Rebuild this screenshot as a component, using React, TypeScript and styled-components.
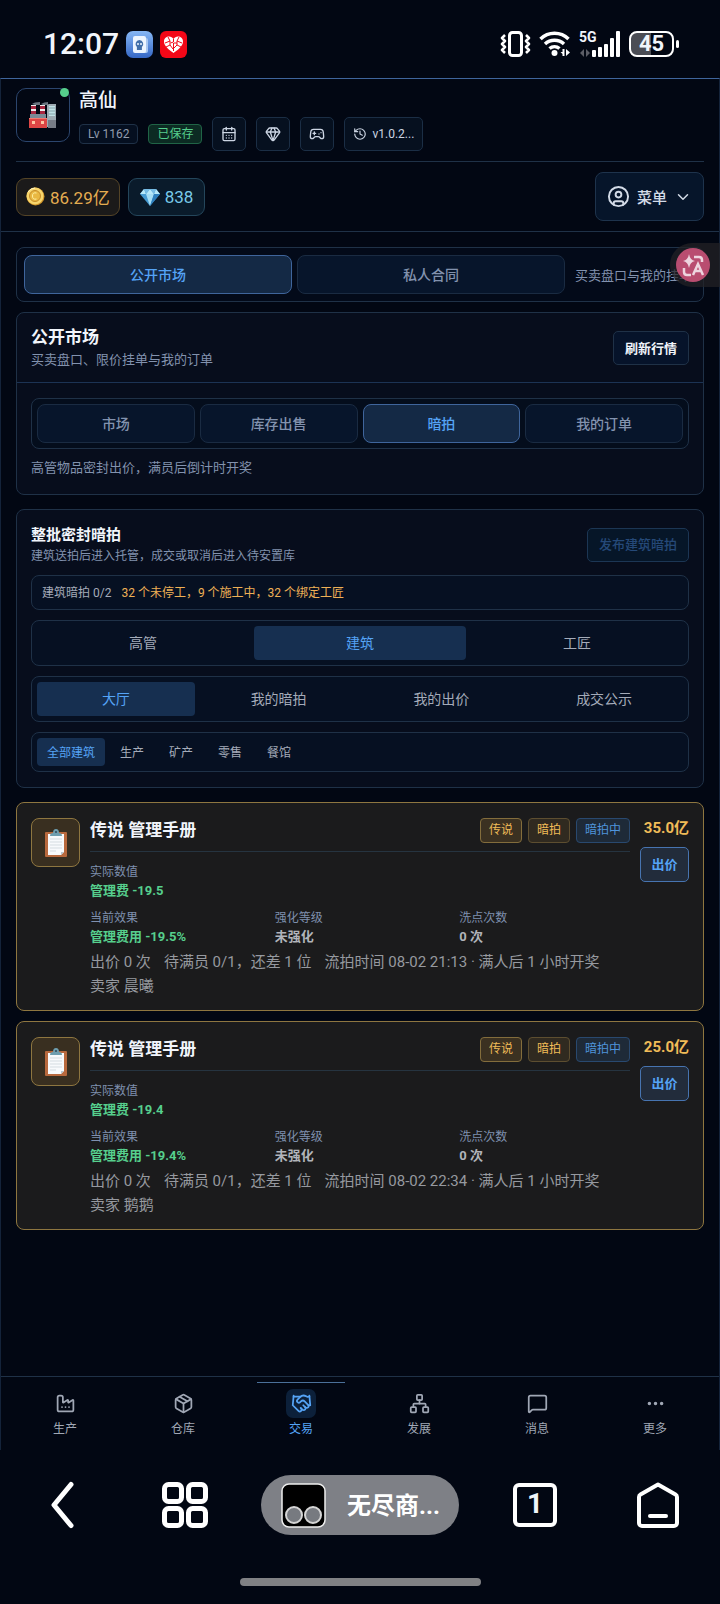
import React from 'react';
import styled, { createGlobalStyle, css } from 'styled-components';
import {
  CalendarDays,
  ChevronDown,
  CircleUser,
  Ellipsis,
  Factory,
  Gamepad2,
  Gem,
  Handshake,
  History,
  MessageSquare,
  Network,
  Package,
} from 'lucide-react';

const color = {
  page: '#020713',
  panel: '#070d1c',
  inset: '#061022',
  button: '#07152b',
  active: '#142945',
  line: '#1f3147',
  blueLine: '#3f659c',
  blue: '#55a3f5',
  text: '#f1f5fb',
  soft: '#a4abb9',
  muted: '#8292ae',
  gold: '#f0bc58',
  green: '#56cf8d',
};

const GlobalStyle = createGlobalStyle`
  * { box-sizing: border-box; }
  body {
    margin: 0;
    background: ${color.page};
    color: ${color.text};
    font-family: Roboto, "Noto Sans CJK SC", sans-serif;
    font-size: 14px;
  }
  button { font: inherit; color: inherit; padding: 0; margin: 0; cursor: pointer; }
  h1, h2, h3, p, dl, dd, dt { margin: 0; font-weight: inherit; font-size: inherit; }
  svg { display: block; flex: none; }
`;

const Screen = styled.div`
  min-height: 100vh;
  display: flex;
  flex-direction: column;
`;

/* ---------- phone status bar ---------- */

const StatusBar = styled.header`
  height: 78px;
  padding: 10px 40px 0 43px;
  display: flex;
  align-items: center;
  justify-content: space-between;
`;

const StatusGroup = styled.div<{ $gap: number }>`
  display: flex;
  align-items: center;
  gap: ${(p) => p.$gap}px;
`;

const Clock = styled.time`
  font-size: 30px;
  line-height: 32px;
  font-weight: 500;
`;

const Cellular = styled.div`
  display: grid;
  grid-template-columns: 12px 30px;
  height: 26px;
  font-size: 14px;
  line-height: 12px;
  font-weight: 700;
`;

const NetworkLabel = styled.span`
  white-space: nowrap;
`;

const Battery = styled.div`
  position: relative;
  width: 45px;
  height: 26px;
  border: 2px solid #fff;
  border-radius: 8px;
  background: linear-gradient(90deg, #4b4d55 48%, transparent 48%);
  font-size: 22px;
  line-height: 22px;
  font-weight: 700;
  text-align: center;
  margin-right: 6px;
  &::after {
    content: '';
    position: absolute;
    right: -7px;
    top: 7px;
    width: 3px;
    height: 8px;
    border-radius: 2px;
    background: #fff;
  }
`;

/* ---------- game frame ---------- */

const Game = styled.div`
  flex: 1;
  display: flex;
  flex-direction: column;
  border: 1px solid #14233a;
  border-top-color: ${color.blueLine};
  border-bottom: 0;
`;

const GameHeader = styled.header`
  padding: 9px 15px 10px;
  border-bottom: 1px solid ${color.line};
`;

const Profile = styled.div`
  display: flex;
  gap: 9px;
  padding-bottom: 10px;
  border-bottom: 1px solid ${color.line};
`;

const Avatar = styled.div`
  position: relative;
  flex: none;
  width: 54px;
  height: 54px;
  border: 1px solid #2b456d;
  border-radius: 10px;
  display: grid;
  place-items: center;
`;

const OnlineDot = styled.span`
  position: absolute;
  top: -1px;
  right: 0;
  width: 9px;
  height: 9px;
  border-radius: 50%;
  background: ${color.green};
`;

const PlayerName = styled.h1`
  font-size: 19px;
  line-height: 26px;
  font-weight: 500;
  margin-bottom: 3px;
`;

const MetaRow = styled.div`
  display: flex;
  align-items: center;
  gap: 10px;
`;

const Badge = styled.span<{ $green?: boolean }>`
  height: 20px;
  padding: 0 8px;
  border: 1px solid ${(p) => (p.$green ? '#206446' : color.line)};
  border-radius: 4px;
  background: ${(p) => (p.$green ? '#0c2b23' : '#050f20')};
  color: ${(p) => (p.$green ? color.green : '#929cad')};
  font-size: 12px;
  line-height: 18px;
`;

const ToolButton = styled.button`
  min-width: 34px;
  height: 34px;
  padding: 0 8px;
  border: 1px solid #1b2e45;
  border-radius: 5px;
  background: #06101f;
  color: #ccd5e3;
  display: flex;
  align-items: center;
  justify-content: center;
  gap: 5px;
  font-size: 12px;
`;

const Wallet = styled.div`
  display: flex;
  align-items: center;
  gap: 8px;
  padding-top: 10px;
`;

const Balance = styled.div<{ $tone: 'gold' | 'ice' }>`
  height: 38px;
  padding: 0 ${(p) => (p.$tone === 'gold' ? 9 : 11)}px;
  display: flex;
  align-items: center;
  gap: 5px;
  border: 1px solid ${(p) => (p.$tone === 'gold' ? '#544427' : '#24465b')};
  border-radius: 9px;
  background: ${(p) => (p.$tone === 'gold' ? '#1b1a1a' : '#0a1b2b')};
  color: ${(p) => (p.$tone === 'gold' ? '#e5ad51' : '#79c9e9')};
  font-size: 17px;
`;

const MenuButton = styled.button`
  height: 49px;
  margin-left: auto;
  padding: 0 11px;
  display: flex;
  align-items: center;
  gap: 7px;
  border: 1px solid #1e334c;
  border-radius: 8px;
  background: #06152a;
  color: #d3dbe7;
  font-size: 15px;
  font-weight: 500;
`;

const Main = styled.main`
  flex: 1;
  padding: 15px 15px 20px;
`;

/* ---------- panels and tabs ---------- */

const frame = css`
  border: 1px solid ${color.line};
  border-radius: 8px;
`;

const MarketSwitch = styled.div`
  ${frame}
  display: grid;
  grid-template-columns: 1fr 1fr 133px;
  gap: 5px;
  align-items: center;
  padding: 7px 0 7px 7px;
  background: #030a19;
`;

const SwitchHint = styled.span`
  padding-left: 5px;
  color: ${color.muted};
  font-size: 13px;
  white-space: nowrap;
`;

const Tab = styled.button<{ $active?: boolean }>`
  height: 39px;
  padding-bottom: 2px;
  border: 1px solid ${(p) => (p.$active ? color.blueLine : '#1a2b42')};
  border-radius: 8px;
  background: ${(p) => (p.$active ? color.active : color.button)};
  color: ${(p) => (p.$active ? color.blue : color.muted)};
  font-weight: 500;
`;

const Panel = styled.section`
  ${frame}
  background: ${color.panel};
`;

const MarketPanel = styled(Panel)`
  margin-top: 10px;
`;

const PanelHead = styled.div`
  display: flex;
  align-items: center;
  justify-content: space-between;
  gap: 10px;
`;

const MarketHead = styled(PanelHead)`
  padding: 12px 14px 11px;
  border-bottom: 1px solid #1c3354;
`;

const PanelTitle = styled.h2`
  font-size: 17px;
  line-height: 24px;
  font-weight: 700;
`;

const SubTitle = styled.h2`
  font-size: 15px;
  line-height: 23px;
  font-weight: 700;
`;

const Note = styled.p<{ $small?: boolean }>`
  color: ${color.muted};
  font-size: ${(p) => (p.$small ? 12 : 13)}px;
  line-height: ${(p) => (p.$small ? 18 : 22)}px;
`;

const MarketBody = styled.div`
  padding: 15px 14px;
`;

const TabFrame = styled.div`
  ${frame}
  display: grid;
  grid-template-columns: repeat(4, 1fr);
  gap: 5px;
  padding: 5px;
  margin-bottom: 8px;
  background: #040d1c;
`;

const SmallButton = styled.button`
  height: 34px;
  padding: 0 11px 2px;
  border: 1px solid ${color.line};
  border-radius: 5px;
  background: #06132a;
  font-size: 13px;
  font-weight: 700;
  &:disabled {
    border-color: #1c3654;
    background: #061628;
    color: #254978;
    font-weight: 500;
    cursor: default;
  }
`;

const AuctionPanel = styled(Panel)`
  margin: 14px 0;
  padding: 14px 14px 15px;
  display: grid;
  gap: 10px;
`;

const Quota = styled.p`
  ${frame}
  height: 35px;
  padding: 0 10px 2px;
  display: flex;
  align-items: center;
  gap: 10px;
  background: ${color.inset};
  color: ${color.soft};
  font-size: 12px;
`;

const Warning = styled.span`
  color: #eeb056;
`;

const Segment = styled.div<{ $columns: number }>`
  ${frame}
  display: grid;
  grid-template-columns: repeat(${(p) => p.$columns}, 1fr);
  gap: 5px;
  padding: 5px;
  background: ${color.inset};
`;

const SegmentButton = styled.button<{ $active?: boolean }>`
  height: 34px;
  padding-bottom: 2px;
  border: 0;
  border-radius: 4px;
  background: ${(p) => (p.$active ? '#162f50' : 'transparent')};
  color: ${(p) => (p.$active ? color.blue : color.soft)};
`;

const Filters = styled.div`
  ${frame}
  display: flex;
  gap: 5px;
  padding: 5px;
  background: ${color.inset};
`;

const FilterChip = styled(SegmentButton)`
  height: 28px;
  padding: 0 10px 2px;
  font-size: 12px;
`;

/* ---------- auction cards ---------- */

const CardList = styled.div`
  display: grid;
  gap: 10px;
`;

const Card = styled.article`
  display: grid;
  grid-template-columns: 49px 1fr auto;
  gap: 10px;
  padding: 15px 14px 12px;
  border: 1px solid #8e7640;
  border-radius: 8px;
  background: #1b1b1c;
`;

const ItemIcon = styled.div`
  width: 49px;
  height: 49px;
  border: 1px solid #8e7640;
  border-radius: 8px;
  background: #392f20;
  display: grid;
  place-items: center;
`;

const CardHead = styled.div`
  height: 34px;
  display: flex;
  gap: 6px;
  border-bottom: 1px solid #263440;
`;

const CardTitle = styled.h3`
  flex: 1;
  font-size: 17px;
  line-height: 24px;
  font-weight: 700;
`;

const Tag = styled.span<{ $tone: 'legend' | 'gold' | 'blue' }>`
  height: 25px;
  padding: 0 8px;
  border: 1px solid
    ${(p) => ({ legend: '#836d3c', gold: '#5d4e30', blue: '#29496f' })[p.$tone]};
  border-radius: 4px;
  background: ${(p) => ({ legend: '#3b3121', gold: '#302a20', blue: '#1e2a38' })[p.$tone]};
  color: ${(p) => (p.$tone === 'blue' ? '#4f94db' : color.gold)};
  font-size: 12px;
  line-height: 23px;
`;

const Stats = styled.dl`
  display: grid;
  grid-template-columns: repeat(3, 1fr);
  gap: 8px 14px;
  padding-top: 11px;
`;

const Stat = styled.div<{ $wide?: boolean }>`
  grid-column: ${(p) => (p.$wide ? '1 / -1' : 'auto')};
`;

const StatLabel = styled.dt`
  color: #7f90ae;
  font-size: 12px;
  line-height: 18px;
`;

const StatValue = styled.dd<{ $green?: boolean }>`
  color: ${(p) => (p.$green ? color.green : '#b1b4ba')};
  font-size: 13px;
  line-height: 20px;
  font-weight: 700;
`;

const Details = styled.p`
  display: flex;
  flex-wrap: wrap;
  column-gap: 13px;
  padding-top: 3px;
  color: #96999f;
  font-size: 15px;
  line-height: 24px;
`;

const BidColumn = styled.div`
  display: flex;
  flex-direction: column;
  align-items: flex-end;
  gap: 8px;
`;

const Price = styled.strong`
  color: ${color.gold};
  font-size: 15px;
  line-height: 21px;
  font-weight: 700;
`;

const BidButton = styled.button`
  width: 49px;
  height: 35px;
  padding-bottom: 2px;
  border: 1px solid #4774b0;
  border-radius: 5px;
  background: #222c3b;
  color: ${color.blue};
  font-size: 13px;
  font-weight: 700;
`;

/* ---------- navigation ---------- */

const BottomNav = styled.nav`
  height: 74px;
  padding: 5px 5px 0;
  display: grid;
  grid-template-columns: repeat(6, 1fr);
  border-top: 1px solid ${color.line};
`;

const NavButton = styled.button<{ $active?: boolean }>`
  position: relative;
  border: 0;
  background: none;
  padding-top: 7px;
  display: flex;
  flex-direction: column;
  align-items: center;
  color: ${(p) => (p.$active ? color.blue : '#a0a7b5')};
  font-size: 12px;
  line-height: 20px;
  &::before {
    content: '';
    display: ${(p) => (p.$active ? 'block' : 'none')};
    position: absolute;
    top: 0;
    left: 15px;
    right: 15px;
    height: 1px;
    background: #4b7099;
  }
`;

const NavIcon = styled.span<{ $active?: boolean }>`
  width: 30px;
  height: 29px;
  margin-bottom: 1px;
  border-radius: 7px;
  display: grid;
  place-items: center;
  background: ${(p) => (p.$active ? '#0c203a' : 'transparent')};
`;

const BrowserBar = styled.nav`
  padding: 25px 38px 43px;
  display: flex;
  align-items: center;
  justify-content: space-between;
`;

const BrowserGroup = styled.div`
  display: flex;
  gap: 75px;
`;

const BrowserButton = styled.button`
  width: 48px;
  height: 48px;
  border: 0;
  background: none;
  display: grid;
  place-items: center;
`;

const TabCount = styled(BrowserButton)`
  width: 44px;
  height: 44px;
  margin: 2px;
  padding-bottom: 3px;
  border: 4px solid #fff;
  border-radius: 6px;
  font-size: 28px;
  line-height: 32px;
  font-weight: 700;
`;

const PageButton = styled.button`
  width: 198px;
  height: 60px;
  padding: 0 20px;
  border: 0;
  border-radius: 30px;
  background: #7e8086;
  display: flex;
  align-items: center;
  gap: 21px;
  color: #fff;
  font-size: 24px;
  font-weight: 700;
  white-space: nowrap;
`;

const PageTitle = styled.span`
  padding-bottom: 3px;
`;

const HomeIndicator = styled.div`
  width: 241px;
  height: 8px;
  margin: 0 auto 18px;
  border-radius: 4px;
  background: #808184;
`;

const Translator = styled.button`
  position: absolute;
  top: 243px;
  right: 0;
  width: 50px;
  height: 44px;
  padding-left: 6px;
  border: 0;
  border-radius: 22px 0 0 22px;
  background: rgba(36, 34, 38, 0.72);
  display: flex;
  align-items: center;
`;

/* ---------- drawings ---------- */

const CardsAppIcon = () => (
  <svg width="27" height="27" viewBox="0 0 27 27">
    <defs>
      <linearGradient id="cards" x1="0" y1="0" x2="0" y2="1">
        <stop offset="0" stopColor="#86b7f5" />
        <stop offset="1" stopColor="#3567c5" />
      </linearGradient>
    </defs>
    <rect width="27" height="27" rx="7" fill="url(#cards)" />
    <rect x="10" y="7" width="12" height="15" rx="2" fill="#a9c8f2" />
    <rect x="7" y="5" width="13" height="17" rx="2" fill="#edf5ff" />
    <path d="M13.400 9a4 4 0 0 0-2.500 7v3h5v-3a4 4 0 0 0-2.500-7z" fill="#426fa9" />
    <circle cx="12" cy="13" r="1" fill="#edf5ff" />
    <circle cx="15" cy="13" r="1" fill="#edf5ff" />
  </svg>
);

const HeartAppIcon = () => (
  <svg width="27" height="27" viewBox="0 0 27 27">
    <rect width="27" height="27" rx="6" fill="#f30717" />
    <path
      d="M13.500 22C9 19 4 15 4 10.500 4 7 6.500 5.500 9 5.500c2 0 3.500 1 4.500 2.500 1-1.500 2.500-2.500 4.500-2.500 2.500 0 5 1.500 5 5 0 4.500-5 8.500-9.500 11.500z"
      fill="#fff"
    />
    <path
      d="M8 6l2 4-5 2M10 10v4l-4 2M13.500 8v3l-3 1M13.500 12v8M19 6l-2 4 5 2M17 10v4l4 2M17 12h-3M10 14l3 4M17 14l-3 3"
      stroke="#f30717"
      fill="none"
      strokeWidth="1"
    />
  </svg>
);

const VibrateIcon = () => (
  <svg width="31" height="26" viewBox="0 0 31 26" fill="none" stroke="#fff">
    <rect x="9.500" y="1.500" width="12" height="23" rx="3" strokeWidth="3" />
    <path
      d="M5 4L2 7l3 3-3 3 3 3-3 3 3 3M26 4l3 3-3 3 3 3-3 3 3 3-3 3"
      strokeWidth="2.500"
      strokeLinejoin="round"
    />
  </svg>
);

const WifiIcon = () => (
  <svg width="32" height="26" viewBox="0 0 32 26" fill="none" stroke="#fff" strokeWidth="3.500">
    <path d="M1.500 8a20 20 0 0 1 28 0M6 13a14 14 0 0 1 19 0M10.500 17.500a8 8 0 0 1 10 0" />
    <circle cx="15.500" cy="22" r="3" fill="#fff" stroke="none" />
    <path d="M21.500 21h2v-3h2v7h-2v-2zM27 18l4 3.500-4 3.500z" fill="#fff" stroke="none" />
  </svg>
);

const SignalIcon = () => (
  <svg width="30" height="26" viewBox="0 0 30 26" fill="#fff" overflow="visible">
    <rect x="1" y="19" width="4" height="7" rx="1" />
    <rect x="7" y="16" width="4" height="10" rx="1" />
    <rect x="13" y="13" width="4" height="13" rx="1" />
    <rect x="19" y="7" width="4" height="19" rx="1" />
    <rect x="25" y="0" width="4" height="26" rx="1" />
    <path d="M-11 22l4-4v8zM-5 18v8l4-4z" fill="#5b5d66" />
  </svg>
);

const FactoryEmoji = () => (
  <svg width="28" height="26" viewBox="0 0 28 26">
    <path d="M3 2q2-2 8-2v3H6zM12 2q3-2 7-2v3h-5z" fill="#68737e" />
    <path d="M18 3l2-1h7v23h-9z" fill="#9daab2" />
    <path d="M20 4h6v10h-6z" fill="#bfe1e5" />
    <path d="M20 6h6M20 9h6M20 12h6" stroke="#87a3aa" />
    <path d="M2 3h5v11H2zM11 3h5v11h-5z" fill="#eee" />
    <path d="M2 4h5v3H2zM11 4h5v3h-5zM2 9h5v3H2zM11 9h5v3h-5z" fill="#a92841" />
    <path d="M1 12h16v13H1z" fill="#7b8a96" />
    <path d="M0 16h9v10H0zM9 16h9v10H9z" fill="#df4645" />
    <path d="M0 16h18v1H0z" fill="#f47a6f" />
    <path d="M3 19h3v3H3zM12 19h3v3h-3z" fill="#ffc6a4" />
    <path d="M19 18h8v8h-8z" fill="#777c86" />
  </svg>
);

const CoinEmoji = () => (
  <svg width="19" height="19" viewBox="0 0 19 19">
    <circle cx="9.500" cy="9.500" r="9" fill="#cf9226" />
    <circle cx="9" cy="9" r="8.500" fill="#f7d56c" />
    <circle cx="9" cy="9" r="5.500" fill="#e9b842" stroke="#c58b29" />
    <path d="M10.500 6q-4-1-4 3t4 3" stroke="#fff0a2" fill="none" />
    <path d="M2 5q3-4 7-4" stroke="#fff3bd" fill="none" />
  </svg>
);

const DiamondEmoji = () => (
  <svg width="20" height="18" viewBox="0 0 20 18">
    <path d="M4 1h12l4 5-10 12L0 6z" fill="#469bd2" />
    <path d="M4 1l2 5H0zM10 1l4 5H6zM16 1l4 5h-6z" fill="#b7e9fa" />
    <path d="M4 1h6L6 6zM10 1h6l-2 5z" fill="#76bce5" />
    <path d="M6 6h8l-4 12z" fill="#a5def5" />
    <path d="M14 6h6L10 18z" fill="#2e7fbd" />
  </svg>
);

const ClipboardEmoji = () => (
  <svg width="22" height="28" viewBox="0 0 22 28">
    <rect x="0" y="3" width="22" height="25" rx="1" fill="#b8693d" />
    <path d="M3 5h16v18l-3 3H3z" fill="#f8fafc" />
    <path d="M5 10h12M5 13h12M5 16h12M5 19h12M5 22h6" stroke="#d5dce1" />
    <path d="M5 7q0-3 3-3 0-4 3-4t3 4q3 0 3 3z" fill="#6e9eaf" />
    <circle cx="11" cy="3" r="1" fill="#31495a" />
    <path d="M16 26v-3h3z" fill="#b9c7cf" />
  </svg>
);

const BackIcon = () => (
  <svg width="24" height="48" viewBox="0 0 24 48" fill="none" stroke="#fff" strokeWidth="5">
    <path d="M21 3.500L4 24l17 20.500" strokeLinecap="round" strokeLinejoin="round" />
  </svg>
);

const GridIcon = () => (
  <svg width="48" height="48" viewBox="0 0 48 48" fill="none" stroke="#fff" strokeWidth="5">
    <rect x="3.500" y="3.500" width="17" height="17" rx="4" />
    <rect x="27.500" y="3.500" width="17" height="17" rx="4" />
    <rect x="3.500" y="27.500" width="17" height="17" rx="4" />
    <rect x="27.500" y="27.500" width="17" height="17" rx="4" />
  </svg>
);

const SiteIcon = () => (
  <svg width="45" height="45" viewBox="0 0 45 45">
    <rect x="1" y="1" width="43" height="43" rx="7" fill="#000" stroke="#eee" strokeWidth="1.500" />
    <circle cx="13" cy="32" r="8" fill="#777a80" stroke="#d5d5d5" strokeWidth="2" />
    <circle cx="32" cy="32" r="8" fill="#777a80" stroke="#d5d5d5" strokeWidth="2" />
  </svg>
);

const HomeIcon = () => (
  <svg width="44" height="48" viewBox="0 0 44 48" fill="none" stroke="#fff" strokeWidth="4">
    <path
      d="M3 16a3 3 0 0 1 1.500-2.500L22 3.500l17.500 10A3 3 0 0 1 41 16v26a3 3 0 0 1-3 3H6a3 3 0 0 1-3-3z"
      strokeLinejoin="round"
    />
    <path d="M14 35h16" strokeLinecap="round" />
  </svg>
);

const TranslateIcon = () => (
  <svg width="34" height="34" viewBox="0 0 34 34">
    <circle cx="17" cy="17" r="17" fill="#b94d70" />
    <path d="M13 6q1 6 6 7-5 1-6 7-1-6-6-7 5-1 6-7z" fill="#eed5df" />
    <path
      d="M18 9h5q3 0 3 3v2M8 20v4q0 3 3 3h4M17 27l5-11 5 11M19 23h6"
      fill="none"
      stroke="#eed5df"
      strokeWidth="2.500"
    />
  </svg>
);

/* ---------- data ---------- */

const marketTabs = ['市场', '库存出售', '暗拍', '我的订单'];
const assetTabs = ['高管', '建筑', '工匠'];
const viewTabs = ['大厅', '我的暗拍', '我的出价', '成交公示'];
const filters = ['全部建筑', '生产', '矿产', '零售', '餐馆'];

const auctions = [
  { id: 1, value: '-19.5', deadline: '08-02 21:13', seller: '晨曦', price: '35.0亿' },
  { id: 2, value: '-19.4', deadline: '08-02 22:34', seller: '鹅鹅', price: '25.0亿' },
];

const navItems = [
  { label: '生产', Icon: Factory },
  { label: '仓库', Icon: Package },
  { label: '交易', Icon: Handshake },
  { label: '发展', Icon: Network },
  { label: '消息', Icon: MessageSquare },
  { label: '更多', Icon: Ellipsis },
];

type Auction = (typeof auctions)[number];

function AuctionCard({ value, deadline, seller, price }: Auction) {
  return (
    <Card>
      <ItemIcon>
        <ClipboardEmoji />
      </ItemIcon>
      <div>
        <CardHead>
          <CardTitle>传说 管理手册</CardTitle>
          <Tag $tone="legend">传说</Tag>
          <Tag $tone="gold">暗拍</Tag>
          <Tag $tone="blue">暗拍中</Tag>
        </CardHead>
        <Stats>
          <Stat $wide>
            <StatLabel>实际数值</StatLabel>
            <StatValue $green>管理费 {value}</StatValue>
          </Stat>
          <Stat>
            <StatLabel>当前效果</StatLabel>
            <StatValue $green>管理费用 {value}%</StatValue>
          </Stat>
          <Stat>
            <StatLabel>强化等级</StatLabel>
            <StatValue>未强化</StatValue>
          </Stat>
          <Stat>
            <StatLabel>洗点次数</StatLabel>
            <StatValue>0 次</StatValue>
          </Stat>
        </Stats>
        <Details>
          <span>出价 0 次</span>
          <span>待满员 0/1，还差 1 位</span>
          <span>流拍时间 {deadline} · 满人后 1 小时开奖</span>
          <span>卖家 {seller}</span>
        </Details>
      </div>
      <BidColumn>
        <Price>{price}</Price>
        <BidButton type="button">出价</BidButton>
      </BidColumn>
    </Card>
  );
}

export default function App() {
  return (
    <>
      <GlobalStyle />
      <Screen>
        <StatusBar>
          <StatusGroup $gap={7}>
            <Clock>12:07</Clock>
            <CardsAppIcon />
            <HeartAppIcon />
          </StatusGroup>
          <StatusGroup $gap={8}>
            <VibrateIcon />
            <WifiIcon />
            <Cellular>
              <NetworkLabel>5G</NetworkLabel>
              <SignalIcon />
            </Cellular>
            <Battery>45</Battery>
          </StatusGroup>
        </StatusBar>

        <Game>
          <GameHeader>
            <Profile>
              <Avatar>
                <FactoryEmoji />
                <OnlineDot />
              </Avatar>
              <div>
                <PlayerName>高仙</PlayerName>
                <MetaRow>
                  <Badge>Lv 1162</Badge>
                  <Badge $green>已保存</Badge>
                  <ToolButton type="button" aria-label="日历">
                    <CalendarDays size={16} />
                  </ToolButton>
                  <ToolButton type="button" aria-label="宝石">
                    <Gem size={16} />
                  </ToolButton>
                  <ToolButton type="button" aria-label="游戏">
                    <Gamepad2 size={16} />
                  </ToolButton>
                  <ToolButton type="button">
                    <History size={14} />
                    v1.0.2...
                  </ToolButton>
                </MetaRow>
              </div>
            </Profile>
            <Wallet>
              <Balance $tone="gold">
                <CoinEmoji />
                86.29亿
              </Balance>
              <Balance $tone="ice">
                <DiamondEmoji />
                838
              </Balance>
              <MenuButton type="button">
                <CircleUser size={23} strokeWidth={2} />
                菜单
                <ChevronDown size={18} />
              </MenuButton>
            </Wallet>
          </GameHeader>

          <Main>
            <MarketSwitch>
              <Tab type="button" $active>
                公开市场
              </Tab>
              <Tab type="button">私人合同</Tab>
              <SwitchHint>买卖盘口与我的挂单</SwitchHint>
            </MarketSwitch>

            <MarketPanel>
              <MarketHead>
                <div>
                  <PanelTitle>公开市场</PanelTitle>
                  <Note>买卖盘口、限价挂单与我的订单</Note>
                </div>
                <SmallButton type="button">刷新行情</SmallButton>
              </MarketHead>
              <MarketBody>
                <TabFrame>
                  {marketTabs.map((label) => (
                    <Tab type="button" key={label} $active={label === '暗拍'}>
                      {label}
                    </Tab>
                  ))}
                </TabFrame>
                <Note>高管物品密封出价，满员后倒计时开奖</Note>
              </MarketBody>
            </MarketPanel>

            <AuctionPanel>
              <PanelHead>
                <div>
                  <SubTitle>整批密封暗拍</SubTitle>
                  <Note $small>建筑送拍后进入托管，成交或取消后进入待安置库</Note>
                </div>
                <SmallButton type="button" disabled>
                  发布建筑暗拍
                </SmallButton>
              </PanelHead>
              <Quota>
                建筑暗拍 0/2
                <Warning>32 个未停工，9 个施工中，32 个绑定工匠</Warning>
              </Quota>
              <Segment $columns={3}>
                {assetTabs.map((label) => (
                  <SegmentButton type="button" key={label} $active={label === '建筑'}>
                    {label}
                  </SegmentButton>
                ))}
              </Segment>
              <Segment $columns={4}>
                {viewTabs.map((label) => (
                  <SegmentButton type="button" key={label} $active={label === '大厅'}>
                    {label}
                  </SegmentButton>
                ))}
              </Segment>
              <Filters>
                {filters.map((label) => (
                  <FilterChip type="button" key={label} $active={label === '全部建筑'}>
                    {label}
                  </FilterChip>
                ))}
              </Filters>
            </AuctionPanel>

            <CardList>
              {auctions.map((auction) => (
                <AuctionCard {...auction} key={auction.id} />
              ))}
            </CardList>
          </Main>

          <BottomNav>
            {navItems.map(({ label, Icon }) => {
              const active = label === '交易';
              return (
                <NavButton type="button" key={label} $active={active}>
                  <NavIcon $active={active}>
                    <Icon size={21} strokeWidth={2} />
                  </NavIcon>
                  {label}
                </NavButton>
              );
            })}
          </BottomNav>
        </Game>

        <BrowserBar>
          <BrowserGroup>
            <BrowserButton type="button" aria-label="后退">
              <BackIcon />
            </BrowserButton>
            <BrowserButton type="button" aria-label="应用">
              <GridIcon />
            </BrowserButton>
          </BrowserGroup>
          <PageButton type="button">
            <SiteIcon />
            <PageTitle>无尽商...</PageTitle>
          </PageButton>
          <BrowserGroup>
            <TabCount type="button">1</TabCount>
            <BrowserButton type="button" aria-label="主页">
              <HomeIcon />
            </BrowserButton>
          </BrowserGroup>
        </BrowserBar>
        <HomeIndicator />
        <Translator type="button" aria-label="翻译">
          <TranslateIcon />
        </Translator>
      </Screen>
    </>
  );
}
